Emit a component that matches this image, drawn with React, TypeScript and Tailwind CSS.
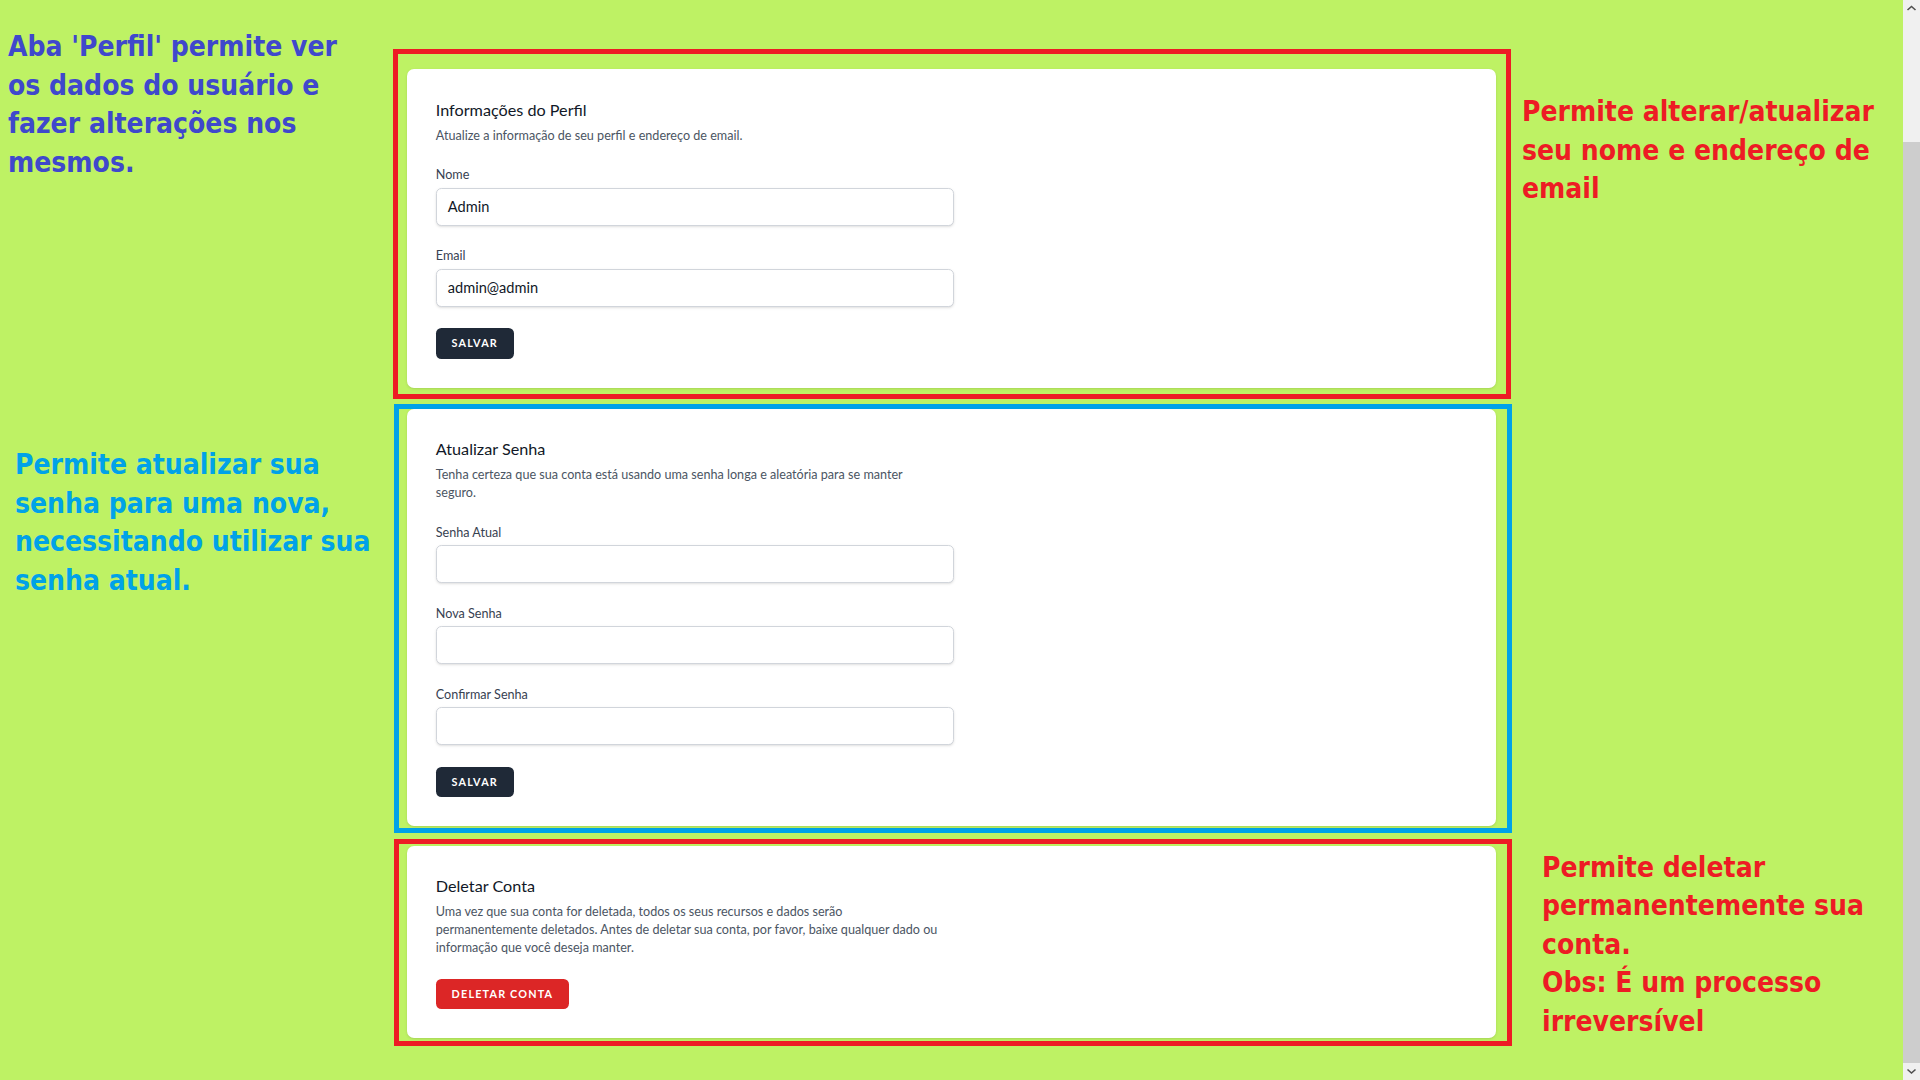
import React from 'react';

const ann = "font-['Liberation_Sans_Narrow','DejaVu_Sans_Condensed',sans-serif] font-bold text-[28px] leading-[38.5px]";
const ui = "font-['Lato','Noto_Sans',sans-serif]";

const Field = ({ label, value }: { label: string; value?: string }) => (
  <div>
    <label className="block text-[12.6px] leading-[18px] text-[#374151]">{label}</label>
    <div className="mt-[3.6px] h-[37.8px] w-[518px] rounded-[5.4px] border border-[#d1d5db] bg-white px-[11px] text-[14.6px] leading-[35px] text-[#111827] shadow-sm">
      {value}
    </div>
  </div>
);

const Button = ({ children, danger }: { children: React.ReactNode; danger?: boolean }) => (
  <button
    className={`h-[30.6px] rounded-[5.4px] px-[15.8px] text-[10.8px] font-bold uppercase tracking-[0.11em] text-white ${
      danger ? 'bg-[#dc2626]' : 'bg-[#1f2937]'
    }`}
  >
    {children}
  </button>
);

const Card = ({ children }: { children: React.ReactNode }) => (
  <div className={`w-[1089px] rounded-[7px] bg-white p-[28.8px] shadow-sm ${ui}`}>{children}</div>
);

const Header = ({ title, children }: { title: string; children: React.ReactNode }) => (
  <header>
    <h2 className="text-[16.2px] leading-[23.2px] text-[#111827]">{title}</h2>
    <p className="mt-[5.6px] text-[12.6px] leading-[18px] text-[#4b5563]">{children}</p>
  </header>
);

const Chevron = ({ down }: { down?: boolean }) => (
  <svg width="17" height="17" viewBox="0 0 17 17">
    <path
      d={down ? 'M4.5 6.5 L8.5 10 L12.5 6.5' : 'M4.5 10 L8.5 6.5 L12.5 10'}
      fill="none"
      stroke="#505050"
      strokeWidth="1.6"
    />
  </svg>
);

export default function App() {
  return (
    <div className="flex h-[1080px] w-[1920px] overflow-hidden bg-[#bef264]">
      <div className="flex flex-1">
        {/* left notes */}
        <div className={`w-[393px] shrink-0 ${ann}`}>
          <p className="mt-[28px] pl-[8px] text-[#3f48cc]">
            Aba 'Perfil' permite ver<br />os dados do usuário e<br />fazer alterações nos<br />mesmos.
          </p>
          <p className="mt-[264px] pl-[15px] text-[#00a2e8]">
            Permite atualizar sua<br />senha para uma nova,<br />necessitando utilizar sua<br />senha atual.
          </p>
        </div>

        {/* forms */}
        <div className="w-[1119px] shrink-0 pt-[49px]">
          <div className="w-[1118px] border-[5px] border-[#ed1c24] pb-[6px] pl-[9px] pr-[10px] pt-[15px]">
            <Card>
              <Header title="Informações do Perfil">Atualize a informação de seu perfil e endereço de email.</Header>
              <div className="mt-[21.6px] flex flex-col gap-[21.6px]">
                <Field label="Nome" value="Admin" />
                <Field label="Email" value="admin@admin" />
                <div className="flex items-center gap-4">
                  <Button>Salvar</Button>
                </div>
              </div>
            </Card>
          </div>

          <div className="ml-px mt-[5px] w-[1118px] border-[5px] border-[#00a2e8] pb-[1.5px] pl-[8px] pr-[11px]">
            <Card>
              <Header title="Atualizar Senha">
                Tenha certeza que sua conta está usando uma senha longa e aleatória para se manter
                <br />
                seguro.
              </Header>
              <div className="mt-[21.6px] flex flex-col gap-[21.6px]">
                <Field label="Senha Atual" />
                <Field label="Nova Senha" />
                <Field label="Confirmar Senha" />
                <div className="flex items-center gap-4">
                  <Button>Salvar</Button>
                </div>
              </div>
            </Card>
          </div>

          <div className="ml-px mt-[6px] w-[1118px] border-[5px] border-[#ed1c24] pb-[3px] pl-[8px] pr-[11px] pt-[2px]">
            <Card>
              <Header title="Deletar Conta">
                Uma vez que sua conta for deletada, todos os seus recursos e dados serão
                <br />
                permanentemente deletados. Antes de deletar sua conta, por favor, baixe qualquer dado ou
                <br />
                informação que você deseja manter.
              </Header>
              <div className="mt-[21.6px]">
                <Button danger>Deletar Conta</Button>
              </div>
            </Card>
          </div>
        </div>

        {/* right notes */}
        <div className={`flex-1 ${ann} text-[#ed1c24]`}>
          <p className="mt-[93px] pl-[10px]">
            Permite alterar/atualizar<br />seu nome e endereço de<br />email
          </p>
          <p className="mt-[640px] pl-[30px]">
            Permite deletar<br />permanentemente sua<br />conta.<br />Obs: É um processo<br />irreversível
          </p>
        </div>
      </div>

      {/* scrollbar */}
      <div className="flex w-[17px] shrink-0 flex-col bg-[#f0f0f0]">
        <Chevron />
        <div className="h-[125px]" />
        <div className="flex-1 bg-[#cdcdcd]" />
        <Chevron down />
      </div>
    </div>
  );
}
